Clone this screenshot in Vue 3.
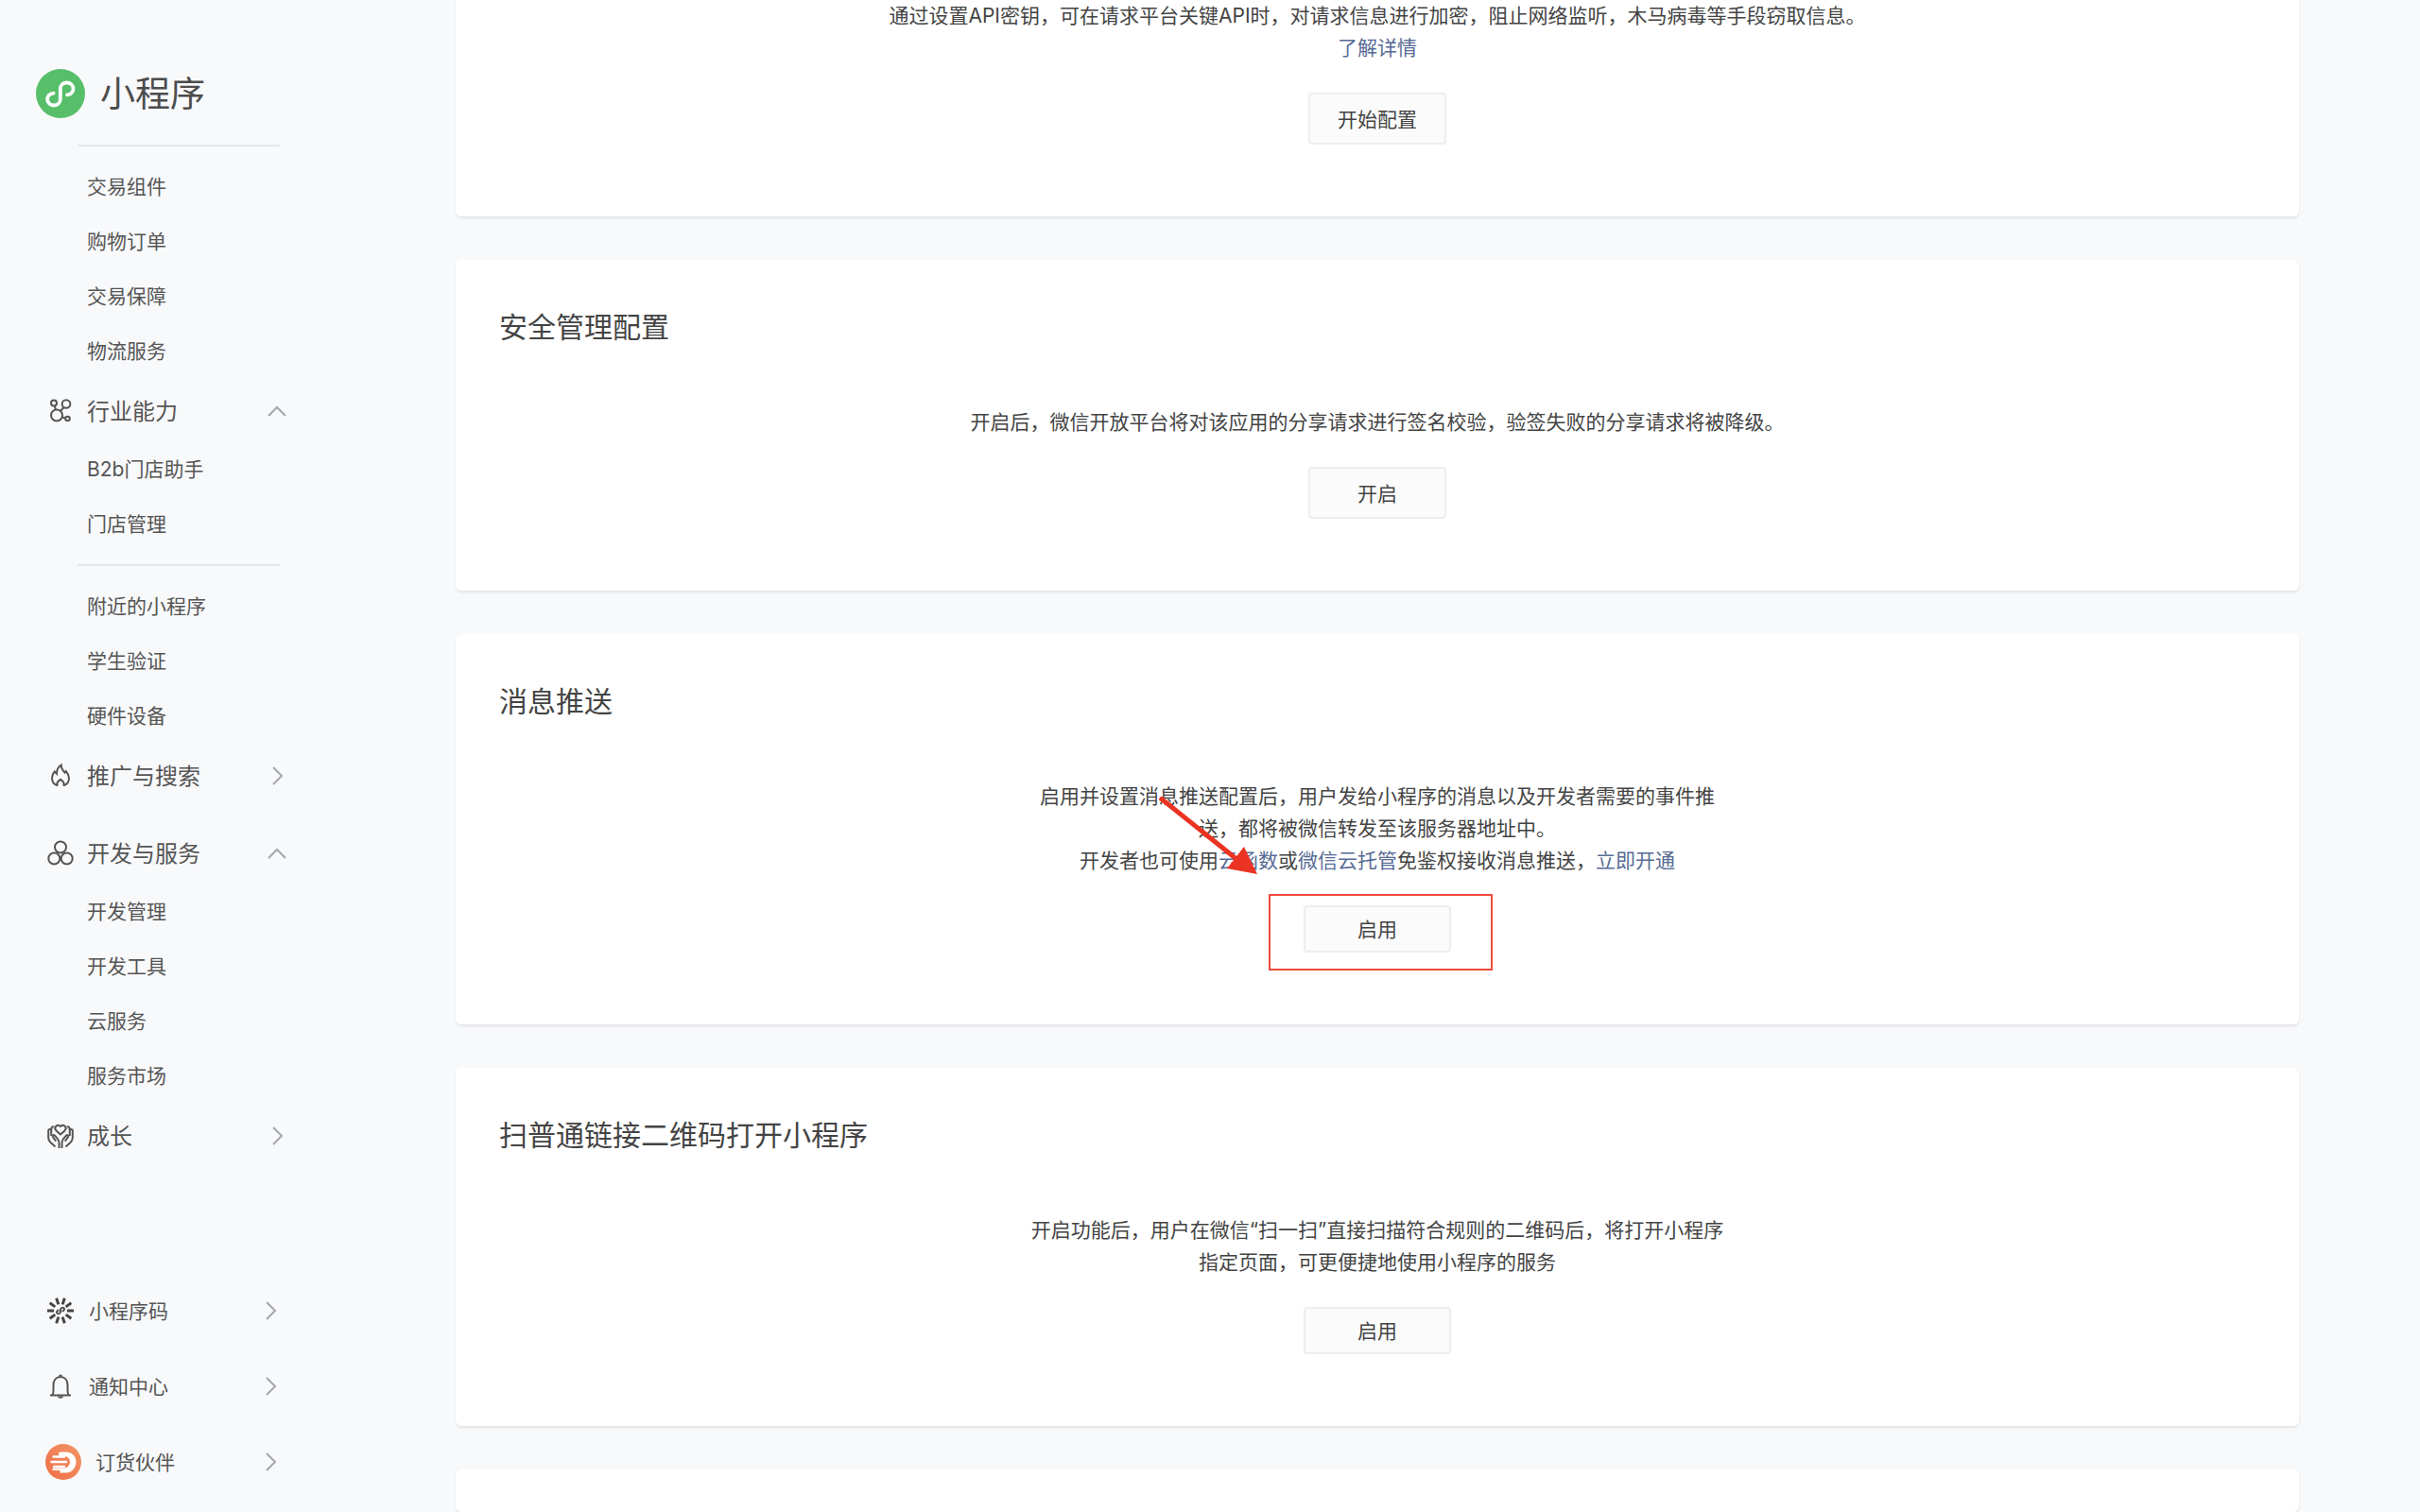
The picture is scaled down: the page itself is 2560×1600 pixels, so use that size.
<script setup>
const groups = [
  {
    key: 'trade',
    divider: true,
    items: ['交易组件', '购物订单', '交易保障', '物流服务'],
  },
  {
    key: 'industry',
    title: '行业能力',
    icon: 'molecule',
    open: true,
    items: ['B2b门店助手', '门店管理'],
  },
  {
    key: 'nearby',
    divider: true,
    items: ['附近的小程序', '学生验证', '硬件设备'],
  },
  { key: 'promote', title: '推广与搜索', icon: 'flame', open: false, items: [] },
  {
    key: 'develop',
    title: '开发与服务',
    icon: 'circles',
    open: true,
    items: ['开发管理', '开发工具', '云服务', '服务市场'],
  },
  { key: 'growth', title: '成长', icon: 'hands', open: false, items: [] },
]

const rays = Array.from({ length: 10 }, (_, i) => 90 + i * 36)
</script>

<template>
  <div class="layout">
    <aside class="sidebar">
      <a class="brand" href="#">
        <svg class="brand-logo" viewBox="0 0 52 52" aria-hidden="true">
          <circle cx="26" cy="26" r="26" fill="#57bf6a" />
          <path
            d="M33 27.400c3.800-.5 6.500-3 6.500-6.400 0-3.700-3-6.500-6.900-6.500s-6.800 2.800-6.800 6.500v11c0 3.700-3 6.500-6.800 6.500s-6.900-2.800-6.900-6.500c0-3.400 2.700-5.900 6.500-6.400"
            fill="none" stroke="#fff" stroke-width="3.800" stroke-linecap="round"
          />
        </svg>
        <span class="brand-name">小程序</span>
      </a>

      <nav class="menu">
        <section
          v-for="g in groups" :key="g.key"
          :class="['group', { collapsed: g.title && !g.open }]"
        >
          <hr v-if="g.divider" class="divider">
          <button v-if="g.title" type="button" class="group-head" :aria-expanded="g.open">
            <svg v-if="g.icon === 'molecule'" class="icon" viewBox="0 0 28 28" aria-hidden="true">
              <circle cx="7" cy="5.500" r="3" />
              <circle cx="20" cy="6.500" r="4.300" />
              <circle cx="10" cy="18.500" r="6" />
              <circle cx="21.500" cy="22" r="2.300" />
              <path d="M7.800 8.500l1 4M17.500 10l-3.500 4M15.500 20.500l3.700 1" />
            </svg>
            <svg v-else-if="g.icon === 'flame'" class="icon" viewBox="0 0 28 28" aria-hidden="true">
              <path d="M10.500 24.300C7 23 5 20 5 16.500c0-2.800 1-5.200 2.700-7l2.300 2.200c-.2-4 1.500-7 4.700-9.200 0 3.700 1.800 5.800 3.800 8.200l1.200-1.700c2 2.200 3.300 4.500 3.300 7.500 0 3.500-2 6.500-5.500 7.800M10.500 24.800v-3c0-1.500 1.500-2.500 3.500-4 2 1.500 3.500 2.500 3.500 4v3" />
            </svg>
            <svg v-else-if="g.icon === 'circles'" class="icon" viewBox="0 0 28 28" aria-hidden="true">
              <circle cx="14" cy="7.500" r="6" />
              <circle cx="7.300" cy="19.500" r="6" />
              <circle cx="20.700" cy="19.500" r="6" />
            </svg>
            <svg v-else class="icon" viewBox="0 0 28 28" aria-hidden="true">
              <path d="M14 12.500L9.300 8.200C6.500 5 10.500 1 14 4c3.500-3 7.500 1 4.700 4.200z" />
              <path d="M12.500 27v-6c0-2-1-3.300-2.300-4.800l-2.400-2.700c-1.300-1-2.600.3-1.800 1.800l3.200 4.400" />
              <path d="M15.500 27v-6c0-2 1-3.300 2.300-4.800l2.400-2.700c1.300-1 2.600.3 1.800 1.800l-3.200 4.400" />
              <path d="M8.500 25.500l-5-4.500c-1.500-1.400-2.300-3-2.300-5V8.500c0-2 3-2 3 0v5.500M19.500 25.500l5-4.500c1.500-1.400 2.300-3 2.300-5V8.500c0-2-3-2-3 0v5.500M4.500 7.500V5.500c.5-1 1.500-1.500 2.500-1M23.500 7.500V5.500c-.5-1-1.500-1.500-2.500-1" />
            </svg>
            <span class="group-title">{{ g.title }}</span>
            <svg class="chevron" viewBox="0 0 22 22" aria-hidden="true">
              <path :d="g.open ? 'M2 16l9-9 9 9' : 'M7 2l9 9-9 9'" />
            </svg>
          </button>
          <ul v-if="g.items.length" class="items">
            <li v-for="item in g.items" :key="item">
              <a class="item" href="#">{{ item }}</a>
            </li>
          </ul>
        </section>
      </nav>

      <div class="account">
        <button type="button" class="account-row">
          <svg class="icon" viewBox="0 0 28 28" aria-hidden="true">
            <path
              v-for="deg in rays" :key="deg" class="ray" d="M14 0v7"
              :transform="`rotate(${deg} 14 14)`"
            />
            <path class="code-mark" d="M15.500 14.500c2.500 0 3.300-2.700 1.500-3.500-1.600-.6-3 .5-3 2v2c0 1.500-1.400 2.600-3 2-1.800-.8-1-3.500 1.500-3.500" />
          </svg>
          <span class="account-label">小程序码</span>
          <svg class="chevron" viewBox="0 0 22 22" aria-hidden="true"><path d="M7 2l9 9-9 9" /></svg>
        </button>
        <button type="button" class="account-row">
          <svg class="icon" viewBox="0 0 28 28" aria-hidden="true">
            <path d="M3 23.500h22M5.500 23c1-1.500 1-3 1-5v-5.500C6.500 7.500 9.500 4 14 4s7.500 3.500 7.500 8.500V18c0 2 0 3.500 1 5" />
            <path class="solid" d="M12 3.500a2 2 0 0 1 4 0zM11 24.500h6c0 3-6 3-6 0z" />
          </svg>
          <span class="account-label">通知中心</span>
          <svg class="chevron" viewBox="0 0 22 22" aria-hidden="true"><path d="M7 2l9 9-9 9" /></svg>
        </button>
        <button type="button" class="account-row">
          <svg class="avatar" viewBox="0 0 38 38" aria-hidden="true">
            <defs>
              <linearGradient id="avatar-fill" x1="0" y1="1" x2="1" y2="0">
                <stop offset="0" stop-color="#ef7044" />
                <stop offset="1" stop-color="#f29468" />
              </linearGradient>
            </defs>
            <circle cx="19" cy="19" r="19" fill="url(#avatar-fill)" />
            <path d="M15.500 8.500H22c6 0 10.500 4.500 10.500 10.500S28 30.500 22 30.500h-5.500c-1.800 0-1.800-2.500 0-2.500H8.500c-1.600 0-1.600-2.500 0-2.500H20c3.500 0 6-3 6-6.500s-2.500-6-6-6h-4.500c-2 0-2-4.500 0-4.500z" fill="#fff" />
            <path d="M8.500 13.500H20M6.500 19H22M9 24h11" fill="none" stroke="#fff" stroke-width="2.400" stroke-linecap="round" />
          </svg>
          <span class="account-label">订货伙伴</span>
          <svg class="chevron" viewBox="0 0 22 22" aria-hidden="true"><path d="M7 2l9 9-9 9" /></svg>
        </button>
      </div>
    </aside>

    <main class="content">
      <section class="card card-first">
        <p class="desc">
          通过设置API密钥，可在请求平台关键API时，对请求信息进行加密，阻止网络监听，木马病毒等手段窃取信息。<br>
          <a href="#">了解详情</a>
        </p>
        <button type="button" class="btn btn-tall">开始配置</button>
      </section>

      <section class="card">
        <h2>安全管理配置</h2>
        <p class="desc">开启后，微信开放平台将对该应用的分享请求进行签名校验，验签失败的分享请求将被降级。</p>
        <button type="button" class="btn btn-tall">开启</button>
      </section>

      <section class="card">
        <h2>消息推送</h2>
        <p class="desc">
          启用并设置消息推送配置后，用户发给小程序的消息以及开发者需要的事件推<br>
          送，都将被微信转发至该服务器地址中。<br>
          开发者也可使用<a href="#">云函数</a>或<a href="#">微信云托管</a>免鉴权接收消息推送，<a href="#">立即开通</a>
        </p>
        <div class="highlighted">
          <button type="button" class="btn">启用</button>
          <span class="highlight-box"></span>
          <svg class="highlight-arrow" viewBox="0 0 104 84" aria-hidden="true">
            <path d="M1 1L82 66" stroke="#eb3323" stroke-width="5" />
            <path d="M104 82L72 76L90 53z" fill="#eb3323" />
          </svg>
        </div>
      </section>

      <section class="card">
        <h2>扫普通链接二维码打开小程序</h2>
        <p class="desc">
          开启功能后，用户在微信“扫一扫”直接扫描符合规则的二维码后，将打开小程序<br>
          指定页面，可更便捷地使用小程序的服务
        </p>
        <button type="button" class="btn">启用</button>
      </section>

      <section class="card card-last"></section>
    </main>
  </div>
</template>

<style>
body {
  background: #f8f9fb;
}
</style>

<style scoped>
.layout {
  display: flex;
  height: 100vh;
  overflow: hidden;
  background: #f8f9fb;
  color: #444;
  font-family: Inter, "Noto Sans CJK SC", sans-serif;
  font-size: 21px;
}

a {
  color: #576b95;
  text-decoration: none;
}

button {
  font: inherit;
  color: inherit;
  cursor: pointer;
}

.sidebar {
  display: flex;
  flex-direction: column;
  flex: none;
  width: 482px;
  box-sizing: border-box;
  padding: 73px 0 13px;
}

.brand {
  display: flex;
  align-items: center;
  gap: 16px;
  height: 52px;
  padding-left: 38px;
  color: #4c4c4c;
}

.brand-logo {
  width: 52px;
  height: 52px;
}

.brand-name {
  padding-top: 2px;
  font-size: 37px;
  line-height: 52px;
}

.menu {
  flex: 1;
  padding-top: 15px;
}

.divider {
  width: 214px;
  height: 2px;
  margin: 13px 0 14px 82px;
  border: 0;
  background: #e4e5e7;
}

.group-head,
.account-row {
  display: flex;
  align-items: center;
  border: 0;
  padding: 0;
  background: none;
  color: #555;
  text-align: left;
}

.group-head {
  width: 254px;
  height: 67px;
  margin-left: 50px;
  font-size: 24px;
}

.collapsed {
  margin-bottom: 15px;
}

.icon {
  flex: none;
  width: 28px;
  height: 28px;
  fill: none;
  stroke: #555;
  stroke-width: 2;
}

.icon .ray {
  stroke: #444;
  stroke-width: 3;
}

.icon .code-mark {
  stroke-width: 2;
}

.icon .solid {
  fill: #555;
  stroke: none;
}

.group-title {
  flex: 1;
  padding: 0 0 3px 14px;
}

.chevron {
  flex: none;
  width: 22px;
  height: 22px;
  fill: none;
  stroke: #a6a7a9;
  stroke-width: 2;
}

.items {
  margin: 0;
  padding: 0;
  list-style: none;
}

.item {
  display: block;
  padding-left: 92px;
  line-height: 58px;
  color: #555;
}

.account-row {
  width: 247px;
  height: 80px;
  margin-left: 50px;
}

.account-label {
  flex: 1;
  padding: 0 0 2px 16px;
}

.avatar {
  flex: none;
  width: 38px;
  height: 38px;
  margin: 0 -1px 0 -2px;
}

.content {
  display: flex;
  flex-direction: column;
  flex: 1;
  gap: 46px;
  padding-right: 128px;
}

.card {
  display: flex;
  flex-direction: column;
  align-items: center;
  flex: none;
  box-sizing: border-box;
  padding: 48px 46px 76px;
  border-radius: 6px;
  background: #fff;
  box-shadow: 0 2px 3px rgba(0, 0, 0, 0.09);
}

.card-first {
  padding-top: 0;
  border-radius: 0 0 6px 6px;
}

.card-last {
  flex: 1;
  padding: 0;
}

h2 {
  align-self: stretch;
  margin: 0 0 61px;
  font-size: 30px;
  font-weight: 400;
  line-height: 46px;
}

.desc {
  margin: 0 0 30px;
  line-height: 34px;
  text-align: center;
}

.btn {
  width: 156px;
  height: 50px;
  padding: 0 0 2px;
  border: 2px solid #eceef0;
  border-radius: 4px;
  background: #fbfbfb;
}

.btn-tall {
  width: 146px;
  height: 55px;
}

.highlighted {
  position: relative;
  display: flex;
}

.highlight-box {
  position: absolute;
  inset: -12px -44px -19px -37px;
  border: 2px solid #ee4a3c;
  pointer-events: none;
}

.highlight-arrow {
  position: absolute;
  left: -153px;
  top: -115px;
  width: 104px;
  height: 84px;
  pointer-events: none;
}
</style>
